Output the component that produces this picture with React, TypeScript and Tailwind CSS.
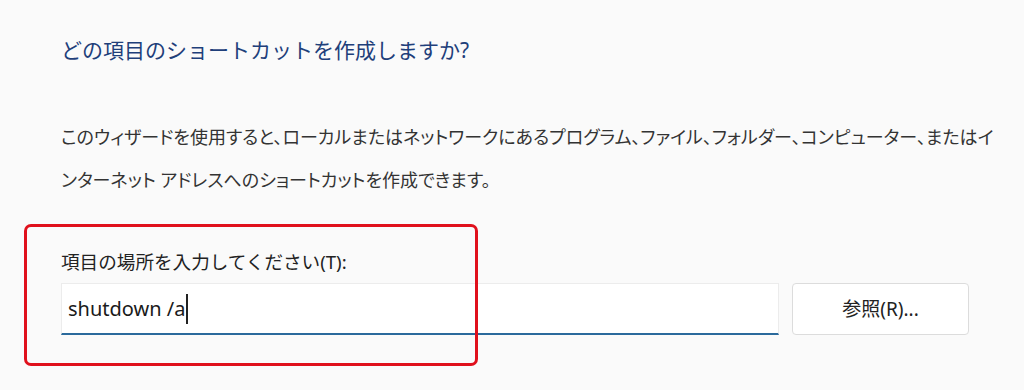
import React from "react";

const jp = { fontFamily: '"Noto Sans", "Noto Sans CJK JP", sans-serif' };
const palt = { fontFeatureSettings: '"palt"' };

const App = () => {
  return (
    <div
      className="relative w-[1024px] h-[390px] overflow-hidden bg-[#fafafa] pl-[61px]"
      style={jp}
    >
      {/* Title */}
      <h1 className="pt-[34px] text-[21px] leading-[32px] text-[#1f3f7a]">
        どの項目のショートカットを作成しますか?
      </h1>

      {/* Description */}
      <p
        className="mt-[50px] text-[18px] leading-[43px] text-[#333] whitespace-nowrap"
        style={palt}
      >
        このウィザードを使用すると、ローカルまたはネットワークにあるプログラム、ファイル、フォルダー、コンピューター、またはイ
        <br />
        ンターネット アドレスへのショートカットを作成できます。
      </p>

      {/* Location field */}
      <div className="mt-[48px]">
        <label className="block text-[18.6px] leading-[24px] text-[#222]">
          項目の場所を入力してください(T):
        </label>
        <div className="mt-[9px] flex items-start">
          <div className="w-[718px] h-[52px] bg-white border border-[#ececec] border-b-2 border-b-[#2b6a9c] flex items-center pl-[6px]">
            <span className="text-[20px] text-[#1a1a1a]">shutdown /a</span>
            <span className="ml-[1px] w-[2px] h-[30px] bg-[#222]" />
          </div>
          <button className="ml-[13px] w-[177px] h-[52px] bg-white border border-[#dcdcdc] rounded-[4px] text-[19px] text-[#222]">
            参照(R)...
          </button>
        </div>
      </div>

      {/* Highlight annotation */}
      <div className="absolute left-[24px] top-[224px] w-[454px] h-[142px] border-[3px] border-[#e0101c] rounded-[7px] pointer-events-none" />
    </div>
  );
};

export default App;
